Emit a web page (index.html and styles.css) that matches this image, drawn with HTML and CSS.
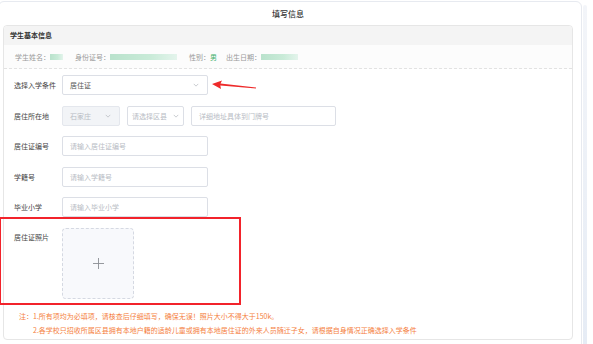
FILE: index.html
```html
<!DOCTYPE html>
<html lang="zh">
<head>
<meta charset="utf-8">
<link rel="stylesheet" href="styles.css">
</head>
<body>
<div class="page">
  <div class="card">
    <div class="card-title">填写信息</div>
    <div class="panel">
      <div class="panel-head">学生基本信息</div>
      <div class="info-row">
        <span class="info-item"><span class="info-label">学生姓名：</span><span class="blur w13"></span></span>
        <span class="info-item"><span class="info-label">身份证号：</span><span class="blur w67"></span></span>
        <span class="info-item"><span class="info-label">性别：</span><span class="male">男</span></span>
        <span class="info-item"><span class="info-label">出生日期：</span><span class="blur w37"></span></span>
      </div>
      <div class="form">
        <div class="row">
          <div class="label">选择入学条件</div>
          <div class="select w146"><span class="val">居住证</span><svg class="chev" viewBox="0 0 8 5"><path d="M1 1 L4 4 L7 1"/></svg></div>
        </div>
        <div class="row">
          <div class="label">居住所在地</div>
          <div class="select w58 disabled"><span class="ph">石家庄</span><svg class="chev" viewBox="0 0 8 5"><path d="M1 1 L4 4 L7 1"/></svg></div>
          <div class="select w57 tight"><span class="ph">请选择区县</span><svg class="chev" viewBox="0 0 8 5"><path d="M1 1 L4 4 L7 1"/></svg></div>
          <div class="input w145"><span class="ph">详细地址具体到门牌号</span></div>
        </div>
        <div class="row">
          <div class="label">居住证编号</div>
          <div class="input w146"><span class="ph">请输入居住证编号</span></div>
        </div>
        <div class="row">
          <div class="label">学籍号</div>
          <div class="input w146"><span class="ph">请输入学籍号</span></div>
        </div>
        <div class="row">
          <div class="label">毕业小学</div>
          <div class="input w146"><span class="ph">请输入毕业小学</span></div>
        </div>
        <div class="row photo-row">
          <div class="label">居住证照片</div>
          <div class="upload"><svg class="plus" viewBox="0 0 12 12"><path d="M6 0 V12 M0 6 H12"/></svg></div>
        </div>
      </div>
      <div class="notes">
        <p>注：1.所有项均为必填项，请核查后仔细填写，确保无误！照片大小不得大于150k。</p>
        <p class="indent">2.各学校只招收所属区县拥有本地户籍的适龄儿童或拥有本地居住证的外来人员随迁子女，请根据自身情况正确选择入学条件</p>
      </div>
    </div>
  </div>
  <div class="strip"></div>
  <div class="highlight"></div>
  <svg class="arrow" viewBox="0 0 46 12"><path d="M0 4 L10 0.5 L8.5 3.6 L44 7.5 L44 8.5 L8.3 5.6 L9 9 Z"/></svg>
</div>
</body>
</html>
```
FILE: styles.css
```css
html, body {
  margin: 0;
  padding: 0;
  background: #ffffff;
}
body {
  font-family: "Noto Sans CJK SC", "Noto Sans", sans-serif;
  font-size: 7px;
  color: #444;
  width: 593px;
  height: 344px;
  overflow: hidden;
}
.page {
  position: relative;
  display: flex;
  align-items: flex-start;
  height: 344px;
}
.card {
  margin-left: -2px;
  margin-top: 1px;
  width: 584px;
  height: 360px;
  border: 1px solid #e7eaf0;
  border-radius: 6px;
  box-sizing: border-box;
  background: #fff;
  padding: 0 8px 0 4px;
}
.card-title {
  height: 23px;
  line-height: 23px;
  text-align: center;
  font-size: 8px;
  color: #333;
  font-weight: 500;
}
.panel {
  border: 1px solid #e6e6e6;
  border-radius: 4px;
  height: 315px;
  box-sizing: border-box;
  position: relative;
}
.panel-head {
  height: 19px;
  line-height: 19px;
  background: #f4f4f4;
  padding-left: 6px;
  font-weight: 700;
  color: #333;
  border-radius: 4px 4px 0 0;
}
.info-row {
  height: 23px;
  display: flex;
  align-items: center;
  padding-left: 11px;
  border-bottom: 1px dashed #e2e2e2;
  background: #fcfcfc;
  color: #999;
  white-space: nowrap;
}
.info-item {
  display: flex;
  align-items: center;
  margin-right: 12px;
}
.info-item:nth-child(3) { margin-right: 9px; }
.blur {
  display: inline-block;
  height: 6px;
  background: linear-gradient(90deg, #b9e2cc, #c9ebd8 60%, #e4f4ec);
  filter: blur(0.6px);
}
.w13 { width: 13px; }
.w67 { width: 67px; }
.w37 { width: 37px; }
.male { color: #3fb06a; }
.form {
  padding: 6px 0 0 10px;
}
.row {
  display: flex;
  align-items: center;
  height: 20px;
  margin-bottom: 10.5px;
  white-space: nowrap;
}
.label {
  width: 48px;
  color: #444;
  flex: none;
}
.select, .input {
  height: 20px;
  box-sizing: border-box;
  border: 1px solid #dcdfe6;
  border-radius: 2px;
  display: flex;
  align-items: center;
  padding: 0 8px 0 7px;
  margin-right: 7px;
  background: #fff;
  flex: none;
  white-space: nowrap;
}
.select { justify-content: space-between; }
.select.tight { padding: 0 4px 0 4px; }
.select.disabled { background: #f2f4f7; border-color: #e4e7ed; }
.w146 { width: 146px; }
.w145 { width: 145px; }
.w58 { width: 58px; }
.w57 { width: 57px; }
.val { color: #555; }
.ph { color: #b8bcc4; }
.chev {
  width: 6px;
  height: 4px;
  fill: none;
  stroke: #b0b4bb;
  stroke-width: 0.9;
  flex: none;
}
.photo-row {
  align-items: flex-start;
  height: 71px;
}
.photo-row .label { padding-top: 4px; }
.upload {
  width: 72px;
  height: 71px;
  box-sizing: border-box;
  border: 1px dashed #d5d9e2;
  border-radius: 4px;
  background: #f8f9fc;
  display: flex;
  align-items: center;
  justify-content: center;
}
.plus {
  width: 11px;
  height: 11px;
  stroke: #8c8f95;
  stroke-width: 1;
  fill: none;
}
.notes {
  color: #f5803e;
  padding-left: 15px;
  margin-top: 2px;
}
.notes p {
  margin: 0;
  line-height: 14px;
}
.notes .indent { padding-left: 14px; }
.strip {
  margin-top: 5px;
  margin-left: 1px;
  width: 4px;
  height: 339px;
  background: linear-gradient(180deg, #f3f5f9, #e6ecf5);
  border-radius: 3px 3px 0 0;
}
.highlight {
  position: absolute;
  left: -1px;
  top: 217px;
  width: 242px;
  height: 88px;
  box-sizing: border-box;
  border: 2px solid #f2232b;
}
.arrow {
  position: absolute;
  left: 212px;
  top: 80px;
  width: 46px;
  height: 12px;
  fill: #ee2a2a;
}
```
